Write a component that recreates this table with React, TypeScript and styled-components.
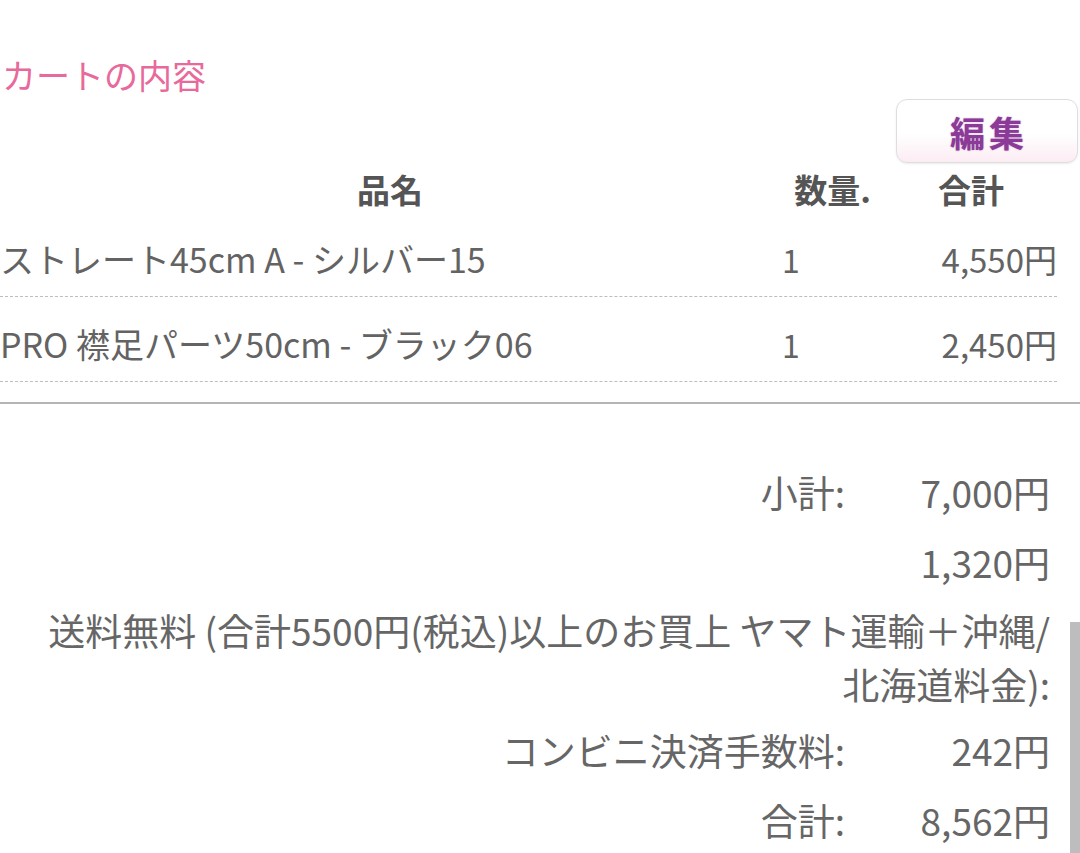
import styled, { createGlobalStyle } from 'styled-components';

const GlobalStyle = createGlobalStyle`
  html, body {
    margin: 0;
    padding: 0;
    background: #ffffff;
  }
  body {
    font-family: "Noto Sans CJK JP", "Noto Sans", sans-serif;
    color: #636363;
    overflow: hidden;
  }
`;

type Item = { name: string; qty: number; total: string };

const items: Item[] = [
  { name: 'ストレート45cm A - シルバー15', qty: 1, total: '4,550円' },
  { name: 'PRO 襟足パーツ50cm - ブラック06', qty: 1, total: '2,450円' },
];

const Page = styled.div`
  position: relative;
  width: 1080px;
  height: 853px;
  overflow: hidden;
  padding-top: 51px;
  box-sizing: border-box;
`;

const Title = styled.h2`
  margin: 0 0 0 2px;
  font-size: 34px;
  line-height: 48px;
  font-weight: 400;
  color: #e8699b;
`;

const ToolRow = styled.div`
  display: flex;
  justify-content: flex-end;
  padding-right: 2px;
`;

const EditButton = styled.button`
  width: 182px;
  height: 64px;
  padding: 0 0 0 4px;
  border: 1.5px solid #dedede;
  border-radius: 11px;
  background: linear-gradient(#ffffff 55%, #fcecf3);
  box-shadow: 0 1px 2px rgba(0, 0, 0, 0.08);
  font-family: "Noto Sans CJK JP", sans-serif;
  font-size: 35px;
  font-weight: 700;
  color: #8b3a98;
  letter-spacing: 4px;
  text-shadow: 0 0 1.5px rgba(139, 58, 152, 0.55);
  cursor: pointer;
`;

const ItemTable = styled.div`
  border-bottom: 2px solid #b4b4b4;
  padding-bottom: 20px;
`;

const ItemRow = styled.div<{ $head?: boolean }>`
  display: grid;
  grid-template-columns: 780px 105px 172px;
  width: 1057px;
  font-size: ${({ $head }) => ($head ? '33px' : '34px')};
  font-weight: ${({ $head }) => ($head ? 700 : 400)};
  color: ${({ $head }) => ($head ? '#555555' : '#636363')};
  line-height: ${({ $head }) => ($head ? '45px' : '48px')};
  padding: ${({ $head }) => ($head ? '4px 0 0' : '23px 0 13px')};
  border-bottom: ${({ $head }) => ($head ? 'none' : '1.5px dashed #bdbdbd')};
`;

const Cell = styled.div<{ $align?: 'left' | 'center' | 'right' }>`
  text-align: ${({ $align }) => $align ?? 'left'};
  white-space: nowrap;
`;

const QtyCell = styled(Cell)`
  padding-left: 2px;
  font-size: 32px;
`;

const PriceCell = styled(Cell)`
  font-size: 33px;
`;

const Totals = styled.div`
  display: grid;
  grid-template-columns: 1fr 205px;
  padding: 53px 30px 0 0;
  font-size: 37px;
  line-height: 54px;
  color: #666666;
`;

const TotalLabel = styled.div<{ $wide?: boolean }>`
  grid-column: ${({ $wide }) => ($wide ? '1 / span 2' : 'auto')};
  text-align: right;
  padding: ${({ $wide }) => ($wide ? '6px 0 4px 20px' : '8px 0 8px 20px')};
`;

const TotalValue = styled.div`
  text-align: right;
  padding: 8px 0;
`;

const ScrollThumb = styled.div`
  position: absolute;
  right: 0;
  top: 622px;
  bottom: 0;
  width: 10px;
  background: #bdbdbd;
`;

export default function App() {
  return (
    <Page>
      <GlobalStyle />
      <Title>カートの内容</Title>
      <ToolRow>
        <EditButton type="button">編集</EditButton>
      </ToolRow>

      <ItemTable>
        <ItemRow $head>
          <Cell $align="center">品名</Cell>
          <Cell $align="center">数量.</Cell>
          <Cell $align="center">合計</Cell>
        </ItemRow>
        {items.map((item) => (
          <ItemRow key={item.name}>
            <Cell>{item.name}</Cell>
            <QtyCell>{item.qty}</QtyCell>
            <PriceCell $align="right">{item.total}</PriceCell>
          </ItemRow>
        ))}
      </ItemTable>

      <Totals>
        <TotalLabel>小計:</TotalLabel>
        <TotalValue>7,000円</TotalValue>
        <TotalLabel />
        <TotalValue>1,320円</TotalValue>
        <TotalLabel $wide>
          送料無料 (合計5500円(税込)以上のお買上 ヤマト運輸＋沖縄/
          <br />
          北海道料金):
        </TotalLabel>
        <TotalLabel>コンビニ決済手数料:</TotalLabel>
        <TotalValue>242円</TotalValue>
        <TotalLabel>合計:</TotalLabel>
        <TotalValue>8,562円</TotalValue>
      </Totals>

      <ScrollThumb />
    </Page>
  );
}
